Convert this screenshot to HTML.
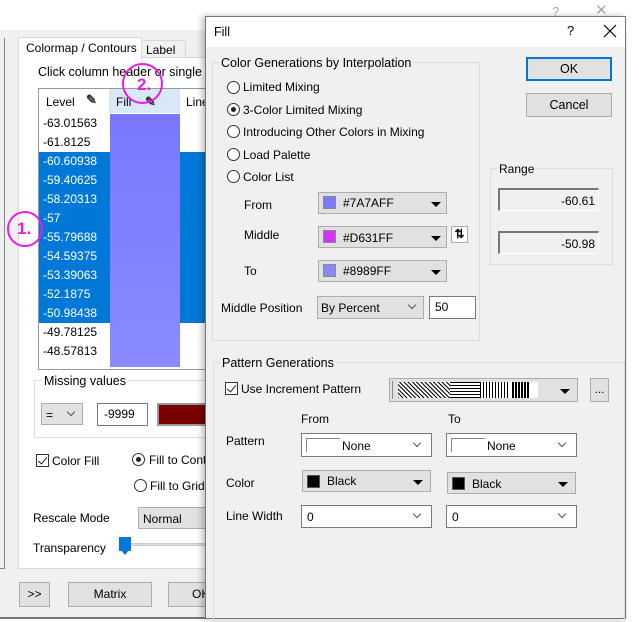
<!DOCTYPE html>
<html><head><style>
*{box-sizing:border-box}
body{margin:0;width:639px;height:619px;overflow:hidden;background:#fff;font-family:"Liberation Sans",Arial,sans-serif;font-size:12px;color:#000;position:relative}
.a{position:absolute}
.t{position:absolute;white-space:nowrap;line-height:14px}
.btn{position:absolute;background:#e1e1e1;border:1px solid #adadad;text-align:center;font-size:12px}
.grp{position:absolute;border:1px solid #dcdcdc}
.gt{position:absolute;background:#f0f0f0;padding:0 2px;line-height:14px}
.cmb{position:absolute;background:#e1e1e1;border:1px solid #adadad}
.wcmb{position:absolute;background:#fff;border:1px solid #7a7a7a}
.sw{position:absolute;width:13px;height:13px;border:1px solid #555}
.tri{position:absolute;width:0;height:0;border-left:5px solid transparent;border-right:5px solid transparent;border-top:5px solid #000}
.chev{position:absolute;width:6px;height:6px;border-right:1px solid #555;border-bottom:1px solid #555;transform:rotate(45deg)}
.rad{position:absolute;width:13px;height:13px;border:1px solid #333;border-radius:50%;background:#fff}
.chk{position:absolute;width:13px;height:13px;border:1px solid #333;background:#fff}
.chk:after{content:"";position:absolute;left:3px;top:0px;width:4px;height:8px;border-right:1.5px solid #222;border-bottom:1.5px solid #222;transform:rotate(40deg)}
.row{position:absolute;left:39px;width:166px;height:19px;line-height:19px;padding-left:4px}
.sel{background:#0078d7;color:#fff}
</style></head><body>
<div class="a" style="left:0;top:30px;width:639px;height:589px;background:#f0f0f0"></div>
<div class="t" style="left:552px;top:5px;color:#aaa;font-size:13px">?</div>
<div class="t" style="left:595px;top:4px;color:#aaa;font-size:15px">✕</div>
<div class="a" style="left:4px;top:38px;width:1px;height:530px;background:#888"></div>
<div class="a" style="left:0;top:568px;width:5px;height:1px;background:#888"></div>
<div class="a" style="left:0;top:617px;width:210px;height:2px;background:#777"></div>
<div class="a" style="left:18px;top:57px;width:200px;height:512px;background:#fff;border:1px solid #d9d9d9"></div>
<div class="a" style="left:141px;top:40px;width:45px;height:18px;background:#f0f0f0;border:1px solid #d9d9d9"></div>
<div class="t" style="left:146px;top:43px">Label</div>
<div class="a" style="left:18px;top:37px;width:124px;height:22px;background:#fff;border:1px solid #d9d9d9;border-bottom:none"></div>
<div class="t" style="left:26px;top:41px">Colormap / Contours</div>
<div class="t" style="left:38px;top:65px;font-size:12.5px">Click column header or single c</div>
<div class="a" style="left:38px;top:88px;width:170px;height:282px;background:#fff;border:1px solid #999"></div>
<div class="a" style="left:109px;top:89px;width:71px;height:24px;background:#d9e8f6"></div>
<div class="t" style="left:46px;top:95px">Level</div>
<div class="t" style="left:116px;top:95px">Fill</div>
<div class="t" style="left:186px;top:95px">Line</div>
<div class="t" style="left:86px;top:93px;color:#333;font-size:13px;font-weight:bold">✎</div>
<div class="t" style="left:145px;top:95px;color:#333;font-size:13px;font-weight:bold">✎</div>
<div class="row" style="top:114px">-63.01563</div>
<div class="row" style="top:133px">-61.8125</div>
<div class="a sel" style="left:39px;top:152px;width:166px;height:171px"></div>
<div class="row sel" style="top:152px">-60.60938</div>
<div class="row sel" style="top:171px">-59.40625</div>
<div class="row sel" style="top:190px">-58.20313</div>
<div class="row sel" style="top:209px">-57</div>
<div class="row sel" style="top:228px">-55.79688</div>
<div class="row sel" style="top:247px">-54.59375</div>
<div class="row sel" style="top:266px">-53.39063</div>
<div class="row sel" style="top:285px">-52.1875</div>
<div class="row sel" style="top:304px">-50.98438</div>
<div class="row" style="top:323px">-49.78125</div>
<div class="row" style="top:342px">-48.57813</div>
<div class="a" style="left:110px;top:114px;width:70px;height:253px;background:linear-gradient(#7878ff,#8a8aff)"></div>
<div class="a" style="left:34px;top:380px;width:180px;height:58px;border:1px solid #dcdcdc"></div>
<div class="t" style="left:42px;top:374px;background:#fff;padding:0 2px;font-size:12.5px">Missing values</div>
<div class="cmb" style="left:41px;top:403px;width:42px;height:22px"><span class="t" style="left:4px;top:4px">=</span><div class="chev" style="left:26px;top:5px"></div></div>
<div class="a" style="left:97px;top:403px;width:51px;height:23px;border:1px solid #7a7a7a;background:#fff"><span class="t" style="left:6px;top:3px">-9999</span></div>
<div class="a" style="left:157px;top:403px;width:55px;height:23px;background:#7a0000;border:2px solid #999"></div>
<div class="chk" style="left:36px;top:454px"></div>
<div class="t" style="left:52px;top:454px">Color Fill</div>
<div class="rad" style="left:132px;top:453px"><div class="a" style="left:3px;top:3px;width:5px;height:5px;border-radius:50%;background:#222"></div></div>
<div class="t" style="left:149px;top:453px">Fill to Cont</div>
<div class="rad" style="left:134px;top:479px"></div>
<div class="t" style="left:150px;top:479px">Fill to Grid</div>
<div class="t" style="left:33px;top:511px">Rescale Mode</div>
<div class="cmb" style="left:138px;top:507px;width:80px;height:22px"><span class="t" style="left:4px;top:4px">Normal</span></div>
<div class="t" style="left:33px;top:541px">Transparency</div>
<div class="a" style="left:125px;top:543px;width:90px;height:3px;background:#ddd;border:1px solid #ccc"></div>
<div class="a" style="left:119px;top:537px;width:12px;height:14px;background:#0078d7"></div>
<div class="a" style="left:121px;top:550px;width:0;height:0;border-left:4px solid transparent;border-right:4px solid transparent;border-top:5px solid #0078d7"></div>
<div class="btn" style="left:19px;top:582px;width:31px;height:25px;line-height:23px">&gt;&gt;</div>
<div class="btn" style="left:68px;top:582px;width:84px;height:25px;line-height:23px">Matrix</div>
<div class="btn" style="left:168px;top:582px;width:50px;height:25px;line-height:23px;text-align:left;padding-left:23px">OK</div>
<div class="a" style="left:7px;top:211px;width:36px;height:36px;border:2px solid #e81ce8;border-radius:50%"></div>
<div class="t" style="left:17px;top:220px;color:#e81ce8;font-weight:bold;font-size:17px;line-height:18px">1.</div>
<div class="a" style="left:122px;top:63px;width:41px;height:41px;border:2px solid #e81ce8;border-radius:50%"></div>
<div class="t" style="left:137px;top:76px;color:#e81ce8;font-weight:bold;font-size:17px;line-height:18px">2.</div>

<div class="a" style="left:205px;top:16px;width:421px;height:603px;background:#f0f0f0;border:1px solid #777;box-shadow:-3px 0 6px rgba(0,0,0,.25)"></div>
<div class="a" style="left:206px;top:17px;width:419px;height:30px;background:#fff"></div>
<div class="t" style="left:214px;top:25px;font-size:12.5px">Fill</div>
<div class="t" style="left:567px;top:24px;font-size:13px">?</div>
<div class="a" style="left:603px;top:24px;width:14px;height:14px"><svg width="14" height="14"><path d="M1 1L13 13M13 1L1 13" stroke="#000" stroke-width="1.2"/></svg></div>
<div class="a" style="left:627px;top:0;width:12px;height:619px;background:#fff"></div>

<div class="grp" style="left:212px;top:62px;width:268px;height:279px"></div>
<div class="gt" style="left:219px;top:56px;font-size:12.5px">Color Generations by Interpolation</div>
<div class="rad" style="left:227px;top:81px"></div><div class="t" style="left:243px;top:80px">Limited Mixing</div>
<div class="rad" style="left:227px;top:103px"><div class="a" style="left:3px;top:3px;width:5px;height:5px;border-radius:50%;background:#222"></div></div><div class="t" style="left:243px;top:103px">3-Color Limited Mixing</div>
<div class="rad" style="left:227px;top:125px"></div><div class="t" style="left:243px;top:125px">Introducing Other Colors in Mixing</div>
<div class="rad" style="left:227px;top:148px"></div><div class="t" style="left:243px;top:148px">Load Palette</div>
<div class="rad" style="left:227px;top:170px"></div><div class="t" style="left:243px;top:170px">Color List</div>
<div class="t" style="left:244px;top:198px">From</div>
<div class="cmb" style="left:318px;top:192px;width:129px;height:22px"><div class="sw" style="left:4px;top:3px;background:#7a7aff;border-color:#888"></div><span class="t" style="left:24px;top:3px">#7A7AFF</span><div class="tri" style="left:112px;top:9px"></div></div>
<div class="t" style="left:244px;top:228px">Middle</div>
<div class="cmb" style="left:318px;top:226px;width:129px;height:22px"><div class="sw" style="left:4px;top:3px;background:#d631ff;border-color:#888"></div><span class="t" style="left:24px;top:4px">#D631FF</span><div class="tri" style="left:112px;top:9px"></div></div>
<div class="a" style="left:451px;top:226px;width:17px;height:17px;background:#fff;border:1px solid #aaa;font-weight:bold;font-size:12px;line-height:14px;text-align:center">⇅</div>
<div class="t" style="left:244px;top:264px">To</div>
<div class="cmb" style="left:318px;top:260px;width:129px;height:22px"><div class="sw" style="left:4px;top:3px;background:#8989ff;border-color:#888"></div><span class="t" style="left:24px;top:3px">#8989FF</span><div class="tri" style="left:112px;top:9px"></div></div>
<div class="t" style="left:221px;top:301px">Middle Position</div>
<div class="cmb" style="left:317px;top:296px;width:107px;height:23px"><span class="t" style="left:3px;top:4px">By Percent</span><div class="chev" style="left:91px;top:5px"></div></div>
<div class="a" style="left:429px;top:296px;width:47px;height:23px;background:#fff;border:1px solid #7a7a7a"><span class="t" style="left:5px;top:3px">50</span></div>

<div class="btn" style="left:526px;top:57px;width:86px;height:24px;line-height:20px;border:2px solid #0078d7;font-size:12.5px">OK</div>
<div class="btn" style="left:526px;top:93px;width:86px;height:24px;line-height:22px;font-size:12.5px">Cancel</div>
<div class="grp" style="left:490px;top:168px;width:123px;height:97px"></div>
<div class="gt" style="left:497px;top:162px">Range</div>
<div class="a" style="left:498px;top:188px;width:101px;height:23px;background:#f0f0f0;border:1px solid #fff;border-top:2px solid #777;border-left:2px solid #777"><span class="t" style="right:3px;top:4px">-60.61</span></div>
<div class="a" style="left:498px;top:231px;width:101px;height:23px;background:#f0f0f0;border:1px solid #fff;border-top:2px solid #777;border-left:2px solid #777"><span class="t" style="right:3px;top:4px">-50.98</span></div>

<div class="grp" style="left:213px;top:362px;width:412px;height:260px"></div>
<div class="gt" style="left:220px;top:356px;font-size:12.5px">Pattern Generations</div>
<div class="chk" style="left:225px;top:382px"></div>
<div class="t" style="left:241px;top:382px">Use Increment Pattern</div>
<div class="a" style="left:389px;top:378px;width:189px;height:24px;background:#e1e1e1;border:1px solid #adadad">
<div class="a" style="left:2px;top:2px;width:3px;height:18px;border-left:1px solid #888"></div>
<div class="a" style="left:8px;top:3px;width:140px;height:16px;background:repeating-linear-gradient(45deg,#000 0 1px,#fff 1px 3px)"></div>
<div class="a" style="left:60px;top:3px;width:30px;height:16px;background:repeating-linear-gradient(0deg,#000 0 1px,#fff 1px 3px)"></div>
<div class="a" style="left:90px;top:3px;width:30px;height:16px;background:repeating-linear-gradient(90deg,#000 0 1px,#fff 1px 3px)"></div>
<div class="a" style="left:120px;top:3px;width:28px;height:16px;background:#fff;"></div>
<div class="a" style="left:122px;top:3px;width:18px;height:16px;background:repeating-linear-gradient(90deg,#000 0 2px,#fff 2px 3px)"></div>
<div class="tri" style="left:170px;top:10px"></div></div>
<div class="btn" style="left:590px;top:378px;width:19px;height:24px;line-height:20px">...</div>
<div class="t" style="left:301px;top:412px">From</div>
<div class="t" style="left:448px;top:412px">To</div>
<div class="t" style="left:226px;top:434px">Pattern</div>
<div class="wcmb" style="left:301px;top:433px;width:131px;height:24px"><div class="a" style="left:4px;top:4px;width:34px;height:14px;border-left:1px solid #888;border-top:1px solid #888"></div><span class="t" style="left:40px;top:5px">None</span><div class="chev" style="left:112px;top:6px"></div></div>
<div class="wcmb" style="left:446px;top:433px;width:131px;height:24px"><div class="a" style="left:4px;top:4px;width:34px;height:14px;border-left:1px solid #888;border-top:1px solid #888"></div><span class="t" style="left:40px;top:5px">None</span><div class="chev" style="left:112px;top:6px"></div></div>
<div class="t" style="left:226px;top:476px">Color</div>
<div class="cmb" style="left:302px;top:470px;width:129px;height:22px"><div class="sw" style="left:4px;top:4px;background:#000"></div><span class="t" style="left:24px;top:3px">Black</span><div class="tri" style="left:110px;top:9px"></div></div>
<div class="cmb" style="left:447px;top:472px;width:129px;height:22px"><div class="sw" style="left:4px;top:4px;background:#000"></div><span class="t" style="left:24px;top:4px">Black</span><div class="tri" style="left:110px;top:9px"></div></div>
<div class="t" style="left:226px;top:509px">Line Width</div>
<div class="wcmb" style="left:301px;top:505px;width:131px;height:23px"><span class="t" style="left:5px;top:4px">0</span><div class="chev" style="left:112px;top:5px"></div></div>
<div class="wcmb" style="left:446px;top:505px;width:131px;height:23px"><span class="t" style="left:5px;top:4px">0</span><div class="chev" style="left:112px;top:5px"></div></div>
</body></html>
